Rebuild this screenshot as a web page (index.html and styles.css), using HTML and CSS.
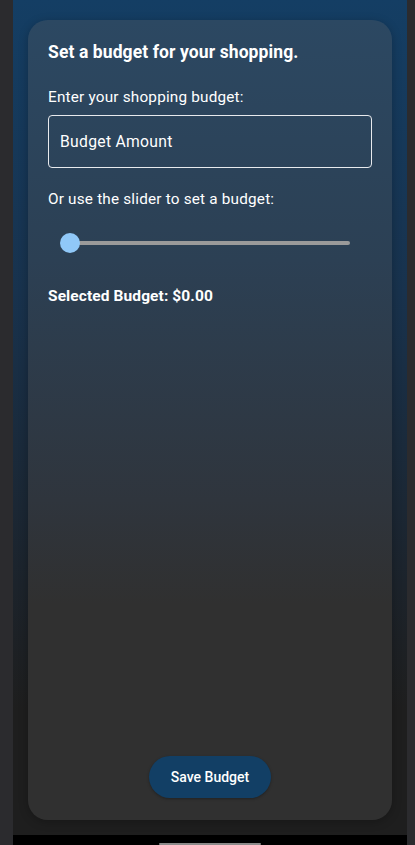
FILE: index.html
```html
<!DOCTYPE html>
<html>
<head>
<meta charset="utf-8">
<link rel="stylesheet" href="styles.css">
</head>
<body>
<div class="device">
  <div class="screen">
    <div class="card">
      <div class="content">
        <h1 class="title">Set a budget for your shopping.</h1>
        <p class="label">Enter your shopping budget:</p>
        <div class="input">Budget Amount</div>
        <p class="label slider-label">Or use the slider to set a budget:</p>
        <div class="slider">
          <div class="track"></div>
          <div class="thumb"></div>
        </div>
        <p class="selected">Selected Budget: $0.00</p>
      </div>
      <div class="actions">
        <button class="save">Save Budget</button>
      </div>
    </div>
  </div>
  <div class="navbar"><div class="home"></div></div>
</div>
</body>
</html>
```
FILE: styles.css
```css
* { box-sizing: border-box; }
html, body { margin: 0; padding: 0; }
body {
  width: 415px;
  height: 845px;
  background: #2b2b2e;
  font-family: Roboto, "Noto Sans", sans-serif;
  color: #fff;
  overflow: hidden;
}
.device {
  margin: 0 8px 0 13px;
  width: 394px;
  height: 845px;
  display: flex;
  flex-direction: column;
}
.screen {
  height: 835px;
  padding: 20px 15px 15px 15px;
  background: linear-gradient(180deg, #143e64 0%, #18324d 35%, #1c232b 70%, #1e1e1e 85%, #1e1e1e 100%);
}
.card {
  height: 800px;
  border-radius: 20px;
  background: linear-gradient(180deg, #2c4862 0%, #2c4054 30%, #2f353d 60%, #303030 73%, #303030 100%);
  box-shadow: 0 2px 10px rgba(0,0,0,0.25);
  padding: 20px 20px 22px 20px;
  display: flex;
  flex-direction: column;
}
.content { flex: 1; }
.title {
  margin: 0;
  font-size: 17.5px;
  font-weight: 700;
  line-height: 24px;
  letter-spacing: 0.1px;
}
.label {
  margin: 23px 0 0 0;
  font-size: 15.3px;
  line-height: 20px;
  letter-spacing: 0.2px;
}
.input {
  margin-top: 8px;
  height: 53px;
  border: 1px solid #e8eaed;
  border-radius: 4px;
  padding: 0 11px;
  display: flex;
  align-items: center;
  font-size: 15.7px;
  letter-spacing: 0.3px;
}
.slider-label { margin-top: 21px; }
.slider {
  position: relative;
  height: 22px;
  margin: 23px 22px 0 12px;
  display: flex;
  align-items: center;
}
.track {
  flex: 1;
  height: 4px;
  border-radius: 2px;
  background: #9a9a9a;
  margin-left: 10px;
}
.thumb {
  position: absolute;
  left: 0;
  top: 1px;
  width: 20px;
  height: 20px;
  border-radius: 50%;
  background: #90c8f8;
}
.selected {
  margin: 32px 0 0 0;
  font-size: 15.5px;
  font-weight: 700;
  line-height: 20px;
  letter-spacing: 0.1px;
}
.actions {
  display: flex;
  justify-content: center;
}
.save {
  width: 122px;
  height: 42px;
  border: none;
  border-radius: 21px;
  background: #123f65;
  color: #fff;
  font-family: Roboto, "Noto Sans", sans-serif;
  font-size: 14px;
  font-weight: 500;
  box-shadow: 0 1px 3px rgba(0,0,0,0.3);
}
.navbar {
  height: 10px;
  background: #000;
  display: flex;
  justify-content: center;
  align-items: flex-end;
}
.home {
  width: 102px;
  height: 2px;
  background: #8a8a8a;
  border-radius: 1px;
}
```
